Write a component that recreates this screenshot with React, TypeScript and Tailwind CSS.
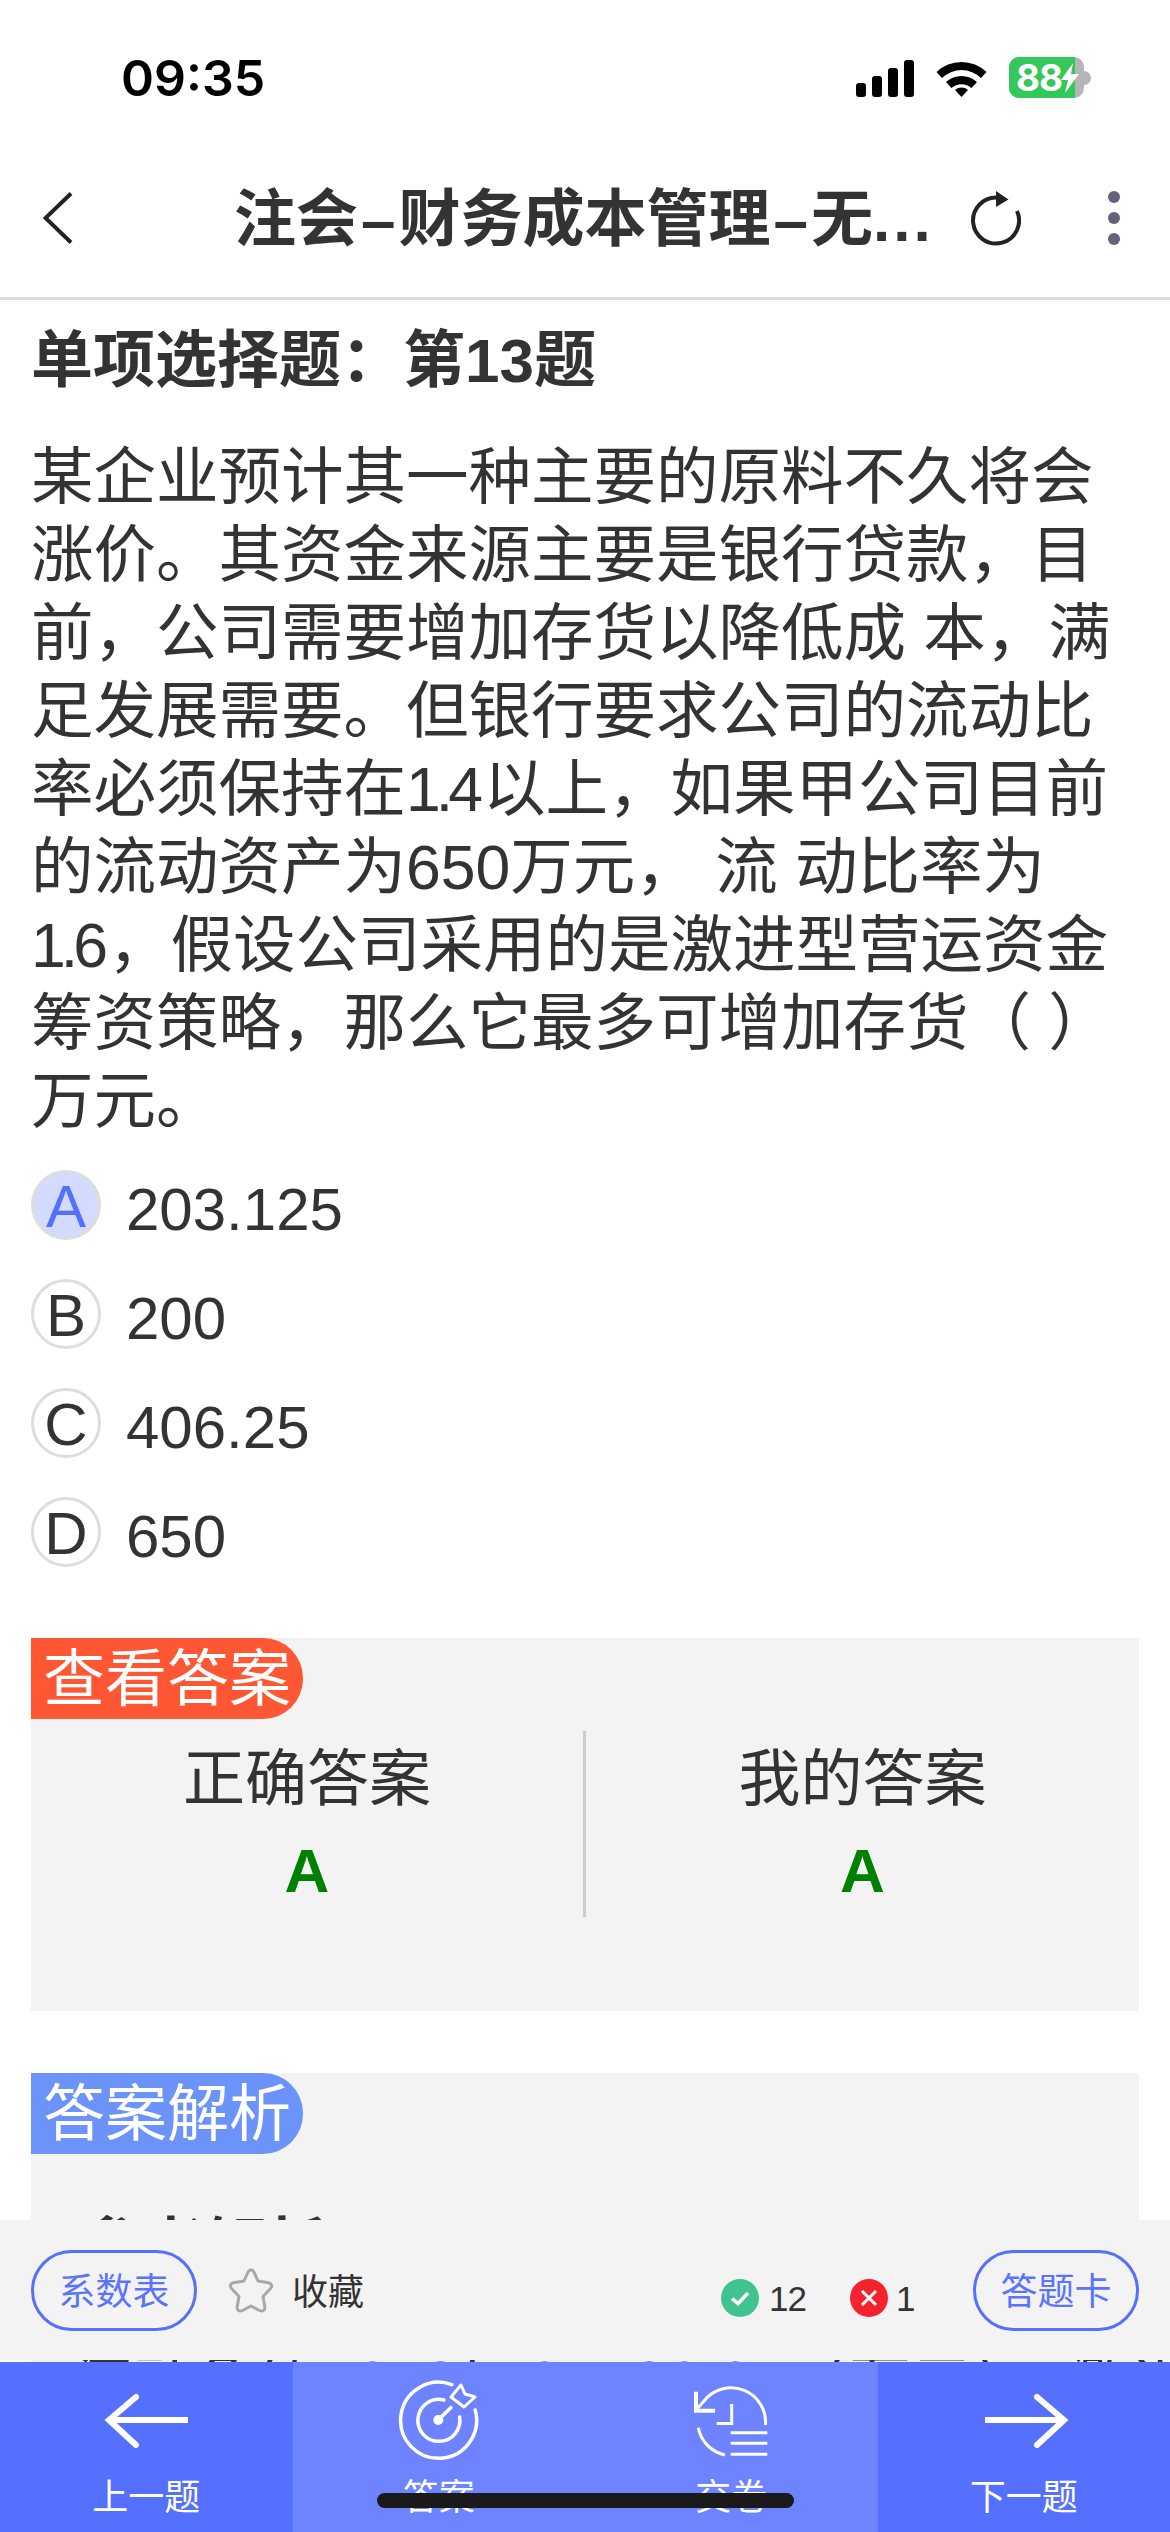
const lines = [
  "某企业预计其一种主要的原料不久将会",
  "涨价。其资金来源主要是银行贷款，目",
  "前，公司需要增加存货以降低成 本，满",
  "足发展需要。但银行要求公司的流动比",
  <>率必须保持在<span className="tracking-[-5px]">1.</span>4以上，如果甲公司目前</>,
  "的流动资产为650万元， 流 动比率为",
  <><span className="tracking-[-5px]">1.</span>6，假设公司采用的是激进型营运资金</>,
  "筹资策略，那么它最多可增加存货（ ）",
  "万元。",
];

const options = [
  { key: "A", value: "203.125", active: true },
  { key: "B", value: "200", active: false },
  { key: "C", value: "406.25", active: false },
  { key: "D", value: "650", active: false },
];

function StatusBar() {
  return (
    <div className="h-[120px] relative">
      <div className="absolute left-[121px] top-[48px] text-[50px] leading-[60px] font-semibold text-black font-['Inter',sans-serif]">
        09:35
      </div>
      <div className="absolute left-[856px] top-[57px] flex items-center">
        <div className="flex items-end gap-[6px] h-[38px]">
          <div className="w-[10px] h-[14px] rounded-[3px] bg-black" />
          <div className="w-[10px] h-[21px] rounded-[3px] bg-black" />
          <div className="w-[10px] h-[29px] rounded-[3px] bg-black" />
          <div className="w-[10px] h-[37px] rounded-[3px] bg-black" />
        </div>
        <svg className="ml-[22px]" width="51" height="38" viewBox="0 0 51 38">
          <path d="M0.5 13 A36 36 0 0 1 50.5 13 L45 19 A28 28 0 0 0 6 19 Z" fill="#000" />
          <path d="M10 23 A23 23 0 0 1 41 23 L35.5 29 A15 15 0 0 0 15.5 29 Z" fill="#000" />
          <path d="M19 31 A10 10 0 0 1 32 31 L25.5 38 Z" fill="#000" />
        </svg>
        <div className="ml-[22px] relative w-[75px] h-[41px] rounded-[10px] overflow-hidden bg-[#b5b5b5]">
          <div className="absolute left-0 top-0 bottom-0 w-[66px] bg-[#34c759]" />
          <div className="absolute left-[7px] top-0 leading-[41px] text-[37px] font-bold text-white font-['Inter',sans-serif] tracking-[-1px]">
            88
          </div>
          <svg className="absolute left-[52px] top-[6px]" width="18" height="30" viewBox="0 0 18 30">
            <path d="M12 0 L0 17 H7 L4 30 L18 11 H10 Z" fill="#fff" />
          </svg>
        </div>
        <div className="w-[7px] h-[14px] rounded-r-full bg-[#b5b5b5]" />
      </div>
    </div>
  );
}

function NavBar() {
  return (
    <div className="h-[180px] border-b-[3px] border-[#dcdcdc] flex items-center pl-[43px] pt-[19px]">
      <svg width="30" height="52" viewBox="0 0 30 52" fill="none">
        <path d="M28 1.5 L2.5 26 L28 50.5" stroke="#222" strokeWidth="4" />
      </svg>
      <div className="ml-[161px] w-[698px] text-[62px] leading-[70px] font-bold text-[#333] whitespace-nowrap pt-[4px]">
        注会<span className="px-[3px]">–</span>财务成本管理<span className="px-[3px]">–</span>无<span className="tracking-[3px]">...</span>
      </div>
      <svg className="ml-[39px]" width="50" height="55" viewBox="0 0 50 55" fill="none">
        <path d="M26 6.5 A23 23 0 1 0 46 20" stroke="#222" strokeWidth="4" />
        <path d="M25 0 L37.5 8.5 L25 16 Z" fill="#222" />
      </svg>
      <div className="ml-[87px] flex flex-col gap-[9px]">
        <div className="w-[12px] h-[12px] rounded-full bg-[#62627a]" />
        <div className="w-[12px] h-[12px] rounded-full bg-[#62627a]" />
        <div className="w-[12px] h-[12px] rounded-full bg-[#62627a]" />
      </div>
    </div>
  );
}

function SectionLabel({ text, color }: { text: string; color: string }) {
  return (
    <div className={`w-[272px] h-[81px] rounded-r-[40px] pl-[12px] pt-[3px] text-[62px] leading-[78px] text-white whitespace-nowrap ${color}`}>
      {text}
    </div>
  );
}

function Pill({ text }: { text: string }) {
  return (
    <div className="w-[166px] h-[81px] rounded-full border-[3px] border-[#5570ff] flex items-center justify-center pt-[3px] text-[37px] leading-none text-[#5b74ff]">
      {text}
    </div>
  );
}

function Star() {
  return (
    <svg width="48" height="48" viewBox="0 0 48 48" fill="none">
      <path
        d="M24 3 C25.5 3 26.5 4 27.2 5.5 L31 14 L41.5 15.8 C45 16.5 45.5 19.5 43.5 21.5 L36 29.5 L37.8 39.5 C38.5 43.5 35.5 45 32.5 43.5 L24 39 L15.5 43.5 C12.5 45 9.5 43.5 10.2 39.5 L12 29.5 L4.5 21.5 C2.5 19.5 3 16.5 6.5 15.8 L17 14 L20.8 5.5 C21.5 4 22.5 3 24 3 Z"
        stroke="#a8a8a8"
        strokeWidth="3"
        strokeLinejoin="round"
      />
    </svg>
  );
}

function TargetIcon() {
  return (
    <svg className="ml-[2px]" width="120" height="100" viewBox="0 0 120 100" fill="none" stroke="#fff" strokeWidth="3.5">
      <path d="M71.7 4.6 A38 38 0 1 0 95.2 30" strokeLinecap="round" />
      <path d="M64 20 A21 21 0 1 0 79.6 37" strokeLinecap="round" />
      <circle cx="58.3" cy="40" r="5" fill="#fff" stroke="none" />
      <path d="M58.3 40 L72 26.5" />
      <path d="M71 17 L81 5 L85 14 L95 17 L84 27 Z" strokeWidth="3" strokeLinejoin="round" />
    </svg>
  );
}

function PaperIcon() {
  return (
    <svg className="ml-[18px]" width="120" height="100" viewBox="0 0 120 100" fill="none" stroke="#fff" strokeWidth="3">
      <path d="M85.5 45 A34.5 34.5 0 0 0 24 21 L16 30" />
      <path d="M16 11.7 V30.7 H35" strokeWidth="4" />
      <path d="M18.3 47.7 A34.5 34.5 0 0 0 45 75" />
      <path d="M51.7 24 V43.5 H36.7" />
      <path d="M50.7 52.7 H87.3 M50.7 63.3 H87.3 M50.7 74.3 H87.3" />
    </svg>
  );
}

function ArrowIcon({ flip }: { flip?: boolean }) {
  return (
    <svg
      width="120"
      height="100"
      viewBox="0 0 120 100"
      fill="none"
      stroke="#fff"
      strokeWidth="6"
      className={flip ? "-scale-x-100 ml-[3px]" : "ml-[3px]"}
    >
      <path d="M100 40 H22" />
      <path d="M48 17 L21 40 L48 65" strokeLinecap="round" />
    </svg>
  );
}

function NavItem({ label, icon, light }: { label: string; icon: React.ReactNode; light?: boolean }) {
  return (
    <div className={`flex flex-col items-center pt-[18px] ${light ? "bg-[#6d83ff]" : "bg-[#5570ff]"}`}>
      {icon}
      <div className="text-[36px] leading-[36px] text-white whitespace-nowrap">{label}</div>
    </div>
  );
}

export default function App() {
  return (
    <div className="relative w-[1170px] h-[2532px] overflow-hidden bg-white text-[#333] font-['Liberation_Sans','Noto_Sans_CJK_SC',sans-serif]">
      <StatusBar />
      <NavBar />

      <div className="px-[31px]">
        <h1 className="mt-[22px] text-[62px] leading-[78px] font-bold">单项选择题：第13题</h1>

        <div className="mt-[38px] text-[62.5px] leading-[78px] whitespace-pre">
          {lines.map((line, i) => (
            <div key={i}>{line}</div>
          ))}
        </div>

        <div className="mt-[30px] flex flex-col gap-[39px]">
          {options.map((o) => (
            <div key={o.key} className="flex items-center gap-[25px]">
              <div
                className={`w-[70px] h-[70px] rounded-full border-[3px] border-[#dddddd] flex items-center justify-center pt-[3px] text-[60px] leading-none ${
                  o.active ? "bg-[#d3dbff] text-[#5570ff]" : "text-[#333]"
                }`}
              >
                {o.key}
              </div>
              <div className="text-[60px] leading-[70px] pt-[5px] h-[70px]">{o.value}</div>
            </div>
          ))}
        </div>

        <section className="mt-[71px] h-[373px] bg-[#f3f3f3]">
          <SectionLabel text="查看答案" color="bg-[#ff5733]" />
          <div className="mt-[12px] h-[186px] grid grid-cols-[552px_1fr]">
            <div className="text-center">
              <div className="text-[62px] leading-[78px] pt-[10px]">正确答案</div>
              <div className="mt-[13px] text-[62px] leading-[78px] font-bold text-[#008000]">A</div>
            </div>
            <div className="text-center border-l-[3px] border-[#cccccc]">
              <div className="text-[62px] leading-[78px] pt-[10px]">我的答案</div>
              <div className="mt-[13px] text-[62px] leading-[78px] font-bold text-[#008000]">A</div>
            </div>
          </div>
        </section>

        <section className="mt-[62px] h-[500px] bg-[#f3f3f3]">
          <SectionLabel text="答案解析" color="bg-[#6b93fa]" />
          <div className="pl-[50px] text-[62px] leading-[78px] font-bold text-[#333] mt-[55px]">参考解析</div>
          <div className="pl-[39px] text-[62px] leading-[78px] text-[#333] mt-[57px] whitespace-nowrap">
            流动负债=650/1.6=406.25（万元），激进型筹资
          </div>
        </section>
      </div>

      <div className="absolute left-0 right-0 bottom-0">
        <div className="h-[140px] bg-[#f3f3f3] flex items-center px-[31px] pt-[1px]">
          <Pill text="系数表" />
          <div className="ml-[30px]">
            <Star />
          </div>
          <div className="ml-[17px] pt-[5px] text-[36px] leading-none">收藏</div>
          <div className="ml-[357px] flex items-center gap-[10px] pt-[15px]">
            <div className="w-[38px] h-[38px] rounded-full bg-[#40c48f] flex items-center justify-center">
              <svg width="26" height="26" viewBox="0 0 26 26" fill="none" stroke="#fff" strokeWidth="3.5">
                <path d="M5 13.5 L11 18.5 L21 8" />
              </svg>
            </div>
            <div className="text-[35px] leading-none tracking-[-1px]">12</div>
          </div>
          <div className="ml-[44px] flex items-center gap-[8px] pt-[15px]">
            <div className="w-[38px] h-[38px] rounded-full bg-[#f5222d] flex items-center justify-center">
              <svg width="26" height="26" viewBox="0 0 26 26" fill="none" stroke="#fff" strokeWidth="3">
                <path d="M6 6 L20 20 M20 6 L6 20" />
              </svg>
            </div>
            <div className="text-[35px] leading-none">1</div>
          </div>
          <div className="ml-auto">
            <Pill text="答题卡" />
          </div>
        </div>
        <div className="mt-[2px] h-[170px] grid grid-cols-4">
          <NavItem label="上一题" icon={<ArrowIcon />} />
          <NavItem label="答案" icon={<TargetIcon />} light />
          <NavItem label="交卷" icon={<PaperIcon />} light />
          <NavItem label="下一题" icon={<ArrowIcon flip />} />
        </div>
      </div>

      <div className="absolute left-[377px] top-[2493px] w-[417px] h-[15px] rounded-full bg-[#1a1a1a]" />
    </div>
  );
}
